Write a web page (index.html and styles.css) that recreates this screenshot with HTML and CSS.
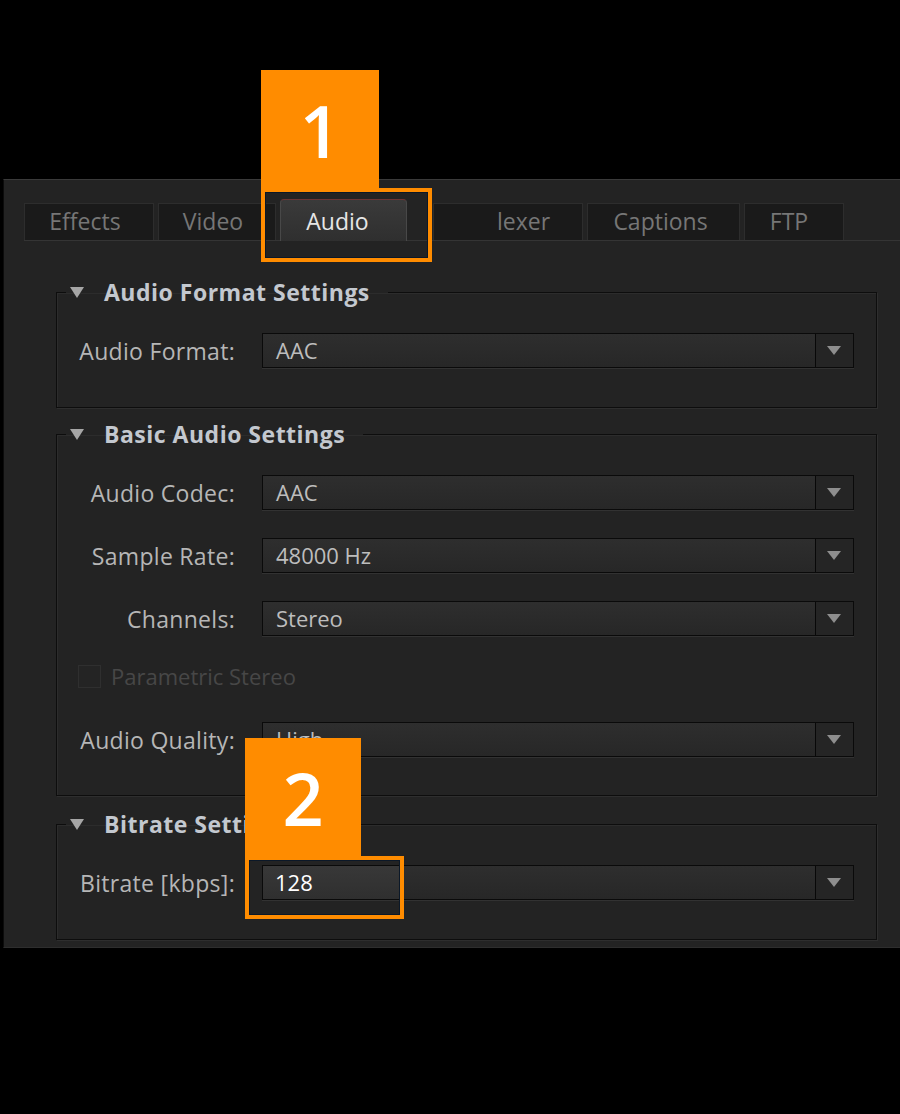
FILE: index.html
```html
<!DOCTYPE html>
<html lang="en">
<head>
  <meta charset="UTF-8">
  <title>Export Settings - Audio</title>
  <link rel="stylesheet" href="styles.css">
</head>
<body>

  <div class="panel">
    <div class="tabs">
      <div class="tab tab-effects">Effects</div>
      <div class="tab tab-video">Video</div>
      <div class="tab tab-audio ativo">Audio</div>
      <div class="tab tab-mux">lexer</div>
      <div class="tab tab-captions">Captions</div>
      <div class="tab tab-ftp">FTP</div>
    </div>

    <fieldset class="grupo grupo-format">
      <legend><span class="seta-legenda"></span>Audio Format Settings</legend>
      <div class="linha">
        <label>Audio Format:</label>
        <div class="select"><span class="valor">AAC</span><span class="seta-select"></span></div>
      </div>
    </fieldset>

    <fieldset class="grupo grupo-basic">
      <legend><span class="seta-legenda"></span>Basic Audio Settings</legend>
      <div class="linha">
        <label>Audio Codec:</label>
        <div class="select"><span class="valor">AAC</span><span class="seta-select"></span></div>
      </div>
      <div class="linha">
        <label>Sample Rate:</label>
        <div class="select"><span class="valor">48000 Hz</span><span class="seta-select"></span></div>
      </div>
      <div class="linha">
        <label>Channels:</label>
        <div class="select"><span class="valor">Stereo</span><span class="seta-select"></span></div>
      </div>
      <div class="linha-check">
        <span class="checkbox"></span>
        <span class="check-texto">Parametric Stereo</span>
      </div>
      <div class="linha linha-quality">
        <label>Audio Quality:</label>
        <div class="select"><span class="valor">High</span><span class="seta-select"></span></div>
      </div>
    </fieldset>

    <fieldset class="grupo grupo-bitrate">
      <legend><span class="seta-legenda"></span>Bitrate Settings</legend>
      <div class="linha">
        <label>Bitrate [kbps]:</label>
        <div class="select"><span class="valor"><span class="campo">128</span></span><span class="seta-select"></span></div>
      </div>
    </fieldset>
  </div>

  <!-- marcadores laranja -->
  <div class="marcador marcador-1">1</div>
  <div class="moldura moldura-1"></div>
  <div class="marcador marcador-2">2</div>
  <div class="moldura moldura-2"></div>

</body>
</html>
```

FILE: styles.css
```css
body {
  margin: 0;
  height: 1114px;
  background: #000;
  font-family: "Open Sans", "Noto Sans", sans-serif;
  overflow: hidden;
}

.panel {
  margin: 179px 0 0 3px;
  padding: 23px 0 7px 20px;
  background: #232323;
  border-top: 1px solid #3a3a3a;
  border-left: 1px solid #0c0c0c;
  border-bottom: 1px solid #2e2e2e;
}

/* Abas */
.tabs {
  display: flex;
  align-items: flex-end;
  gap: 4px;
  height: 37px;
  border-bottom: 1px solid #343434;
}

.tab {
  box-sizing: border-box;
  height: 37px;
  line-height: 35px;
  background: #1a1a1a;
  border: 1px solid #2d2d2d;
  border-bottom: none;
  color: #767676;
  font-size: 23px;
  text-align: center;
}

.tab-effects { width: 130px; padding-right: 8px; }
.tab-video { width: 118px; padding-right: 8px; }
.tab-audio { width: 127px; padding-right: 12px; }
.tab-mux {
  width: 150px;
  margin-left: 22px;
  text-align: left;
  padding-left: 63px;
}
.tab-captions { width: 153px; padding-right: 6px; }
.tab-ftp { width: 100px; padding-right: 10px; }

.tab.ativo {
  height: 42px;
  line-height: 42px;
  margin-bottom: -1px;
  background: linear-gradient(#3a3a3a, #2f2f2f);
  border-color: #484848;
  border-top: 1px solid #6c3434;
  border-radius: 4px 4px 0 0;
  color: #e6e6e6;
}

/* Grupos */
.grupo {
  margin: 36px 23px 0 32px;
  padding: 26px 21px 39px 9px;
  border: 1px solid #0d0d0d;
  box-shadow: 1px 1px 0 #2e2e2e, inset 1px 1px 0 #2c2c2c;
  min-width: 0;
}

.grupo-basic {
  margin-top: 11px;
  padding-bottom: 38px;
}

.grupo-bitrate {
  margin-top: 13px;
}

legend {
  display: flex;
  align-items: center;
  height: 30px;
  padding: 0 18px 0 4px;
  color: #c3c8cf;
  font-size: 23px;
  font-weight: 700;
  letter-spacing: 0.5px;
}

.seta-legenda {
  width: 0;
  height: 0;
  border-left: 7px solid transparent;
  border-right: 7px solid transparent;
  border-top: 11px solid #a6a6a6;
  margin-right: 20px;
}

.linha {
  display: grid;
  grid-template-columns: 169px 592px;
  column-gap: 27px;
  align-items: center;
}

.linha + .linha {
  margin-top: 28px;
}

.linha label {
  text-align: right;
  color: #b6b6b6;
  font-size: 23px;
  letter-spacing: 0.3px;
  white-space: nowrap;
}

.select {
  box-sizing: border-box;
  display: flex;
  height: 35px;
  border: 1px solid #0a0a0a;
  background: linear-gradient(#2e2e2e, #272727);
  box-shadow: 0 1px 0 #323232;
}

.valor {
  flex: 1;
  padding-left: 13px;
  line-height: 33px;
  color: #bdbdbd;
  font-size: 22px;
}

.grupo-bitrate .valor {
  padding-left: 0;
}

.campo {
  display: block;
  width: 136px;
  box-sizing: border-box;
  padding-left: 12px;
  background: linear-gradient(#383838, #2f2f2f);
  color: #fff;
}

.seta-select {
  width: 37px;
  border-left: 1px solid #080808;
  background: #252525;
  position: relative;
}

.seta-select::after {
  content: "";
  position: absolute;
  left: 11px;
  top: 12px;
  border-left: 7px solid transparent;
  border-right: 7px solid transparent;
  border-top: 9px solid #8e8e8e;
}

.linha-check {
  display: flex;
  align-items: center;
  height: 24px;
  margin: 28px 0 0 12px;
}

.checkbox {
  box-sizing: border-box;
  width: 23px;
  height: 23px;
  border: 1px solid #2f2f2f;
  background: #242424;
  margin-right: 10px;
}

.check-texto {
  color: #474747;
  font-size: 22px;
}

.linha.linha-quality {
  margin-top: 34px;
}

/* Marcadores */
.marcador {
  position: absolute;
  display: flex;
  align-items: center;
  justify-content: center;
  background: #ff8c00;
  color: #fff;
  font-size: 72px;
  font-weight: 600;
}

.marcador-1 {
  left: 261px;
  top: 70px;
  width: 118px;
  height: 120px;
}

.marcador-2 {
  left: 245px;
  top: 738px;
  width: 116px;
  height: 120px;
}

.moldura {
  position: absolute;
  box-sizing: border-box;
  border: 4px solid #ff8c00;
  box-shadow: inset 0 0 0 1px #0b1828;
}

.moldura-1 {
  left: 261px;
  top: 188px;
  width: 171px;
  height: 74px;
}

.moldura-2 {
  left: 245px;
  top: 856px;
  width: 159px;
  height: 63px;
}
```
